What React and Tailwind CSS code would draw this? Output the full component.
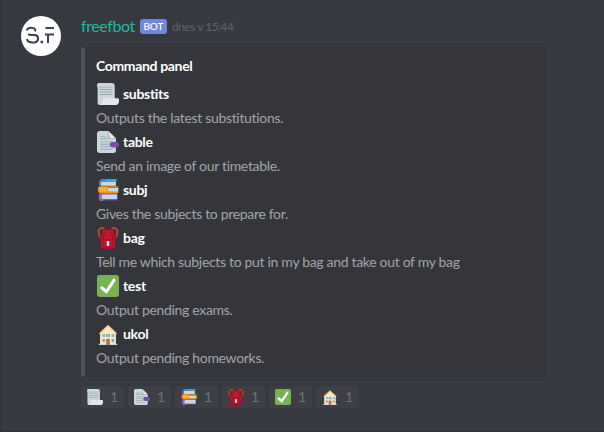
function Scroll({ className }) {
  return (
    <svg viewBox="0 0 36 36" className={className}>
      <path fill="#CCD6DD" d="M24 0H3C1 0 0 2 0 4s1 3 1 3v25c0 2 1 4 3 4h21l4-8V4c0-2-2-4-5-4z" />
      <path fill="#E1E8ED" d="M34 25H14c-2 0-4 1-5 3-1 3-1 6-3 8h26c2 0 4-3 4-6v-3c0-1-1-2-2-2z" />
      <path fill="#99AAB5" d="M4 6h21v1.500H4zM4 10h21v1.500H4zM4 14h21v1.500H4zM4 18h21v1.500H4z" />
    </svg>
  );
}

function Bookmark({ className }) {
  return (
    <svg viewBox="0 0 36 36" className={className}>
      <path fill="#CCD6DD" d="M19 0H4C2 0 0 2 0 4v28c0 2 2 4 4 4h23c3 0 4-2 4-4V12H19z" />
      <path fill="#E1E8ED" d="M19 0v8c0 2 2 4 4 4h8z" />
      <path fill="#99AAB5" d="M5 8h10v1.500H5zM5 12h12v1.500H5zM5 17h21v1.500H5zM5 21h16v1.500H5zM5 25h17v1.500H5zM5 29h21v1.500H5z" />
      <rect x="21" y="18" width="15" height="9" rx="4" fill="#744EAA" />
    </svg>
  );
}

function Books({ className }) {
  return (
    <svg viewBox="0 0 36 36" className={className}>
      <path fill="#226699" d="M8 1h23v11H6C1 12 2 1 8 1z" />
      <path fill="#CCD6DD" d="M8 4h23v7H8c-3 0-3-7 0-7z" />
      <path fill="#3B88C3" d="M8 0h24v4H9c-3 0-4 4-2 8H5C2 9 3 1 8 0z" />
      <path fill="#55ACEE" d="M15 1h17v2H15z" />
      <path fill="#553788" d="M6 23h28v13H6c-5 0-5-13 0-13z" />
      <path fill="#CCD6DD" d="M10 25h23v8H10c-4 0-4-8 0-8z" />
      <path fill="#9268CA" d="M5 23h28v2H10c-4 0-4 8 0 8v3H6c-4 0-4-12-1-13z" />
      <path fill="#F4900C" d="M5 12h30v2H19v7h16v2H5c-5 0-5-11 0-11z" />
      <path fill="#CCD6DD" d="M20 14.500h15V21H20c-3 0-3-6.500 0-6.500z" />
      <path fill="#FFAC33" d="M5 13h12c-2 3-1 6 1 8H6c-3-1-3-7-1-8z" />
    </svg>
  );
}

function Backpack({ className }) {
  return (
    <svg viewBox="0 0 36 36" className={className}>
      <path fill="none" stroke="#8F3024" strokeWidth="4" d="M12 4C9 0 4 2 2.500 6 1 11 4 15 8 22M24 4c3-4 8-2 9.500 2C35 11 32 15 28 22" />
      <path fill="none" stroke="#C1543B" strokeWidth="2" d="M12 3C9 0 4 2 2.500 6 2 9 3 12 5 15M24 3c3-3 8-1 9.500 3 .5 3-.5 6-2.500 9" />
      <path fill="#A0041E" d="M10 5c1-3 15-3 16 0l4 13v14c0 3-2 4-4 4H10c-3 0-4-1-4-4V18z" />
      <path fill="#BE1931" d="M10 5h16l3 13v14c0 2-1 3-3 3H10c-2 0-3-1-3-3V18z" />
      <path fill="none" stroke="#A0041E" strokeWidth="1.200" d="M12 8l-2 13h16L24 8M10 23v10h16V23" />
      <path fill="#E1E8ED" d="M16 23h4v8h-4z" />
    </svg>
  );
}

function Check({ className }) {
  return (
    <svg viewBox="0 0 36 36" className={className}>
      <rect width="36" height="36" rx="4" fill="#77B255" />
      <path fill="#FFF" d="M29.280 6.362a2.502 2.502 0 0 0-3.458.736L14.936 23.877l-5.029-4.650a2.500 2.500 0 1 0-3.394 3.671l7.209 6.666c.48.445 1.090.665 1.696.665.673 0 1.534-.282 2.099-1.139.332-.506 12.500-19.270 12.500-19.270a2.500 2.500 0 0 0-.737-3.458z" />
    </svg>
  );
}

function House({ className }) {
  return (
    <svg viewBox="0 0 36 36" className={className}>
      <path fill="#FFE8B6" d="M5 17 18 5l13 12v18H5z" />
      <path fill="#F3D2A2" d="M18 3 4 16v3L18 6l14 13v-3z" />
      <path fill="#55ACEE" d="M9 18h4v5H9zM15 18h6v5h-6zM24 18h4v5h-4zM9 26h4v5H9zM24 26h4v5h-4z" />
      <path fill="#C1694F" d="M15 26h6v9h-6z" />
      <path fill="#CCD6DD" d="M3 34h12v2H3zM21 34h12v2H21z" />
      <path stroke="#FFE8B6" strokeWidth=".8" d="M18 18v5M11 18v5M26 18v5" />
    </svg>
  );
}

const commands = [
  { name: 'substits', text: 'Outputs the latest substitutions.', Icon: Scroll },
  { name: 'table', text: 'Send an image of our timetable.', Icon: Bookmark },
  { name: 'subj', text: 'Gives the subjects to prepare for.', Icon: Books },
  { name: 'bag', text: 'Tell me which subjects to put in my bag and take out of my bag', Icon: Backpack },
  { name: 'test', text: 'Output pending exams.', Icon: Check },
  { name: 'ukol', text: 'Output pending homeworks.', Icon: House },
];

function Avatar() {
  return (
    <div className="mt-4 size-10 shrink-0 overflow-hidden rounded-full bg-white">
      <svg viewBox="0 0 40 40" className="size-10" fill="none" stroke="#3d4453" strokeWidth="2">
        <path d="M5.800 14.500C6.500 12 9 11.500 11.500 12c2.500.4 3.500 2 2.500 3.500" />
        <path d="M7 18.300c2 .9 4 .4 7 .8 4.500.8 4 6.800-.5 7.300-4 .4-7 .1-7.500-3.400" />
        <path d="M24.500 12H33M24 18.500h9M27 18.500V27" />
        <path d="M19.500 26H22" strokeWidth="2.500" />
      </svg>
    </div>
  );
}

export default function App() {
  return (
    <main className="flex h-[432px] w-[604px] border-b border-l border-b-[#303136] border-l-[#303237] bg-[#36393f] pl-5 font-['Lato',sans-serif]">
      <Avatar />
      <section className="ml-5 min-w-0">
        <header className="flex h-[47px] items-start pt-4">
          <span className="text-[16px] leading-[20px] tracking-[-0.4px] text-[#1abc9c]">freefbot</span>
          <span className="mt-[3px] ml-[5px] flex h-[15px] w-[27px] items-center justify-center rounded-[3px] bg-[#7289da] text-[10px] font-medium text-white">BOT</span>
          <time className="ml-[5px] text-[12px] leading-[22px] tracking-[-0.5px] text-[#5f6369]">dnes v 15:44</time>
        </header>
        <article className="h-[330px] w-[465px] rounded-[3px] border border-l-4 border-[#323338] border-l-[#4f545c] bg-[#35363b] pt-[7px] pl-[11px]">
          <h1 className="h-6 text-[14px] leading-[22px] font-bold tracking-[-0.34px] text-white">Command panel</h1>
          {commands.map(({ name, text, Icon }) => (
            <div key={name} className="h-12">
              <h2 className="flex h-7 items-center pl-px text-[14px] font-bold tracking-[-0.3px] text-white">
                <Icon className="mt-0.5 mr-1 size-[22px] shrink-0" />
                {name}
              </h2>
              <p className="h-5 text-[14px] leading-[22px] tracking-[-0.32px] whitespace-nowrap text-[#a3a5a8]">{text}</p>
            </div>
          ))}
        </article>
        <footer className="mt-[9px] flex gap-1">
          {commands.map(({ name, Icon }) => (
            <button key={name} className="flex h-[22px] w-[43px] items-center rounded-[3px] bg-[#3d3f44] pl-1.5">
              <Icon className="size-4" />
              <span className="ml-[7px] text-[14px] leading-5 text-[#6d7278]">1</span>
            </button>
          ))}
        </footer>
      </section>
    </main>
  );
}
